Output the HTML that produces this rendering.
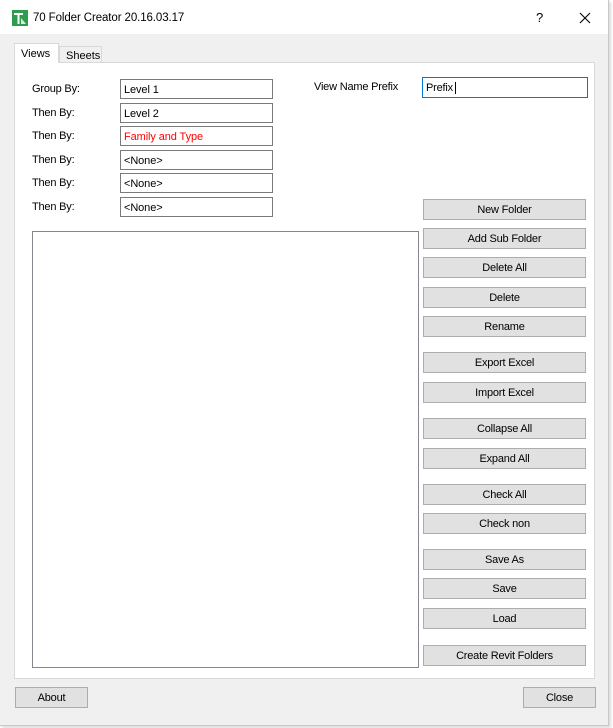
<!DOCTYPE html>
<html><head><style>
*{box-sizing:border-box;margin:0;padding:0}
body{width:613px;height:728px;background:#fff;font-family:"Liberation Sans",sans-serif;font-size:11px;color:#000;position:relative;overflow:hidden}
.win{position:absolute;left:0;top:0;width:609px;height:726px;background:#f0f0f0;border-right:1px solid #c8c8c8;border-bottom:1px solid #c8c8c8;box-shadow:2px 2px 3px rgba(0,0,0,.15)}
.title{position:absolute;left:0;top:0;width:608px;height:34px;background:#fff}
.a{position:absolute}
.panel{position:absolute;left:14px;top:62px;width:581px;height:617px;background:#fff;border:1px solid #d9d9d9}
.tab{position:absolute;border:1px solid #d9d9d9;border-bottom:none;font-size:11px;padding-left:6px}
.lbl{position:absolute;left:32px;font-size:11px;letter-spacing:-.2px}
.tb{position:absolute;left:120px;width:153px;height:20px;border:1px solid #7a7a7a;background:#fff;padding:4px 0 0 3px;font-size:11px;letter-spacing:-.1px}
.btn{position:absolute;left:423px;width:163px;height:21px;border:1px solid #adadad;background:#e1e1e1;text-align:center;font-size:11px;line-height:21px;letter-spacing:-.2px}
</style></head><body>
<div class="win">
<div class="title">
<svg class="a" style="left:12px;top:10px" width="16" height="16"><rect width="16" height="16" fill="#2e9b4e"/><path d="M2 3h9v2H7.5v9h-2V5H2z" fill="#fff"/><path d="M9 8l5 6H9z" fill="#d8efd8"/></svg>
<div class="a" style="left:33px;top:12px;font-size:11.5px;letter-spacing:-.1px">70 Folder Creator 20.16.03.17</div>
<div class="a" style="left:536px;top:10px;font-size:13px">?</div>
<svg class="a" style="left:579px;top:12px" width="12" height="12"><path d="M1 1L11 11M11 1L1 11" stroke="#000" stroke-width="1.1"/></svg>
</div>
<div class="tab" style="left:59px;top:46px;width:43px;height:16px;background:#f0f0f0;padding-top:3px">Sheets</div>
<div class="panel"></div>
<div class="tab" style="left:14px;top:43px;width:45px;height:20px;background:#fff;padding-top:4px;z-index:2">Views</div>
<div class="lbl" style="top:83px">Group By:</div>
<div class="lbl" style="top:107px">Then By:</div>
<div class="lbl" style="top:130px">Then By:</div>
<div class="lbl" style="top:154px">Then By:</div>
<div class="lbl" style="top:177px">Then By:</div>
<div class="lbl" style="top:201px">Then By:</div>
<div class="tb" style="top:79px">Level 1</div>
<div class="tb" style="top:103px">Level 2</div>
<div class="tb" style="top:126px;color:#f00">Family and Type</div>
<div class="tb" style="top:150px">&lt;None&gt;</div>
<div class="tb" style="top:173px">&lt;None&gt;</div>
<div class="tb" style="top:197px">&lt;None&gt;</div>
<div class="a" style="left:314px;top:81px;letter-spacing:-.2px">View Name Prefix</div>
<div class="a" style="left:422px;top:77px;width:166px;height:21px;border:1px solid #0078d7;background:#fff;padding:4px 0 0 3px;letter-spacing:-.2px">Prefix <span style="border-left:1px solid #000;margin-left:2px"></span></div>
<div class="a" style="left:32px;top:231px;width:387px;height:437px;border:1px solid #828790;background:#fff"></div>
<div class="btn" style="top:199px">New Folder</div>
<div class="btn" style="top:228px">Add Sub Folder</div>
<div class="btn" style="top:257px">Delete All</div>
<div class="btn" style="top:287px">Delete</div>
<div class="btn" style="top:316px">Rename</div>
<div class="btn" style="top:352px">Export Excel</div>
<div class="btn" style="top:382px">Import Excel</div>
<div class="btn" style="top:418px">Collapse All</div>
<div class="btn" style="top:448px">Expand All</div>
<div class="btn" style="top:484px">Check All</div>
<div class="btn" style="top:513px">Check non</div>
<div class="btn" style="top:549px">Save As</div>
<div class="btn" style="top:578px">Save</div>
<div class="btn" style="top:608px">Load</div>
<div class="btn" style="top:645px">Create Revit Folders</div>
<div class="btn" style="left:15px;top:687px;width:73px">About</div>
<div class="btn" style="left:523px;top:687px;width:73px">Close</div>
</div>
</body></html>
